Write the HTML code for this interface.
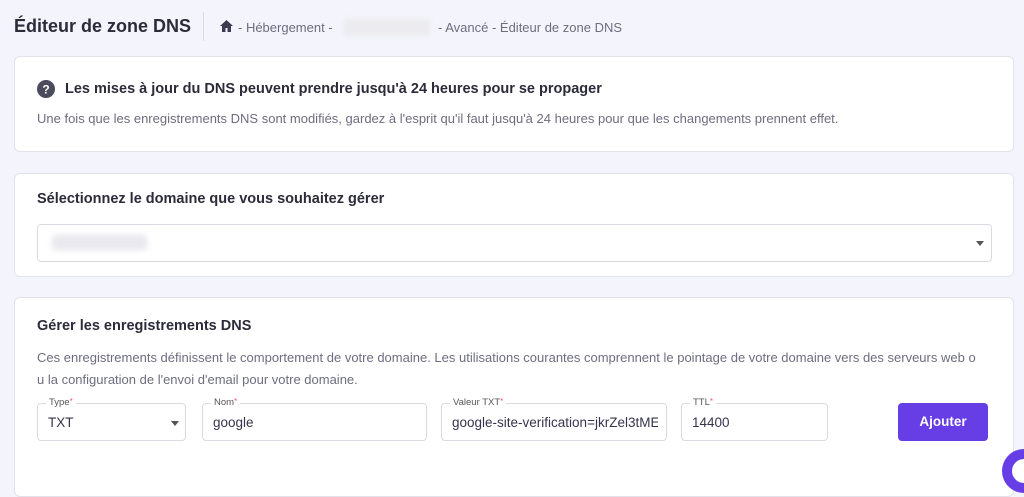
<!DOCTYPE html>
<html><head><meta charset="utf-8"><style>
*{box-sizing:border-box;margin:0;padding:0}
body{width:1024px;height:467px;overflow:hidden;background:#f4f5fc;font-family:"Liberation Sans",sans-serif;color:#36344d;position:relative}
.abs{position:absolute}
.card{position:absolute;left:14px;width:1000px;background:#fff;border:1px solid #e2e2ea;border-radius:6px}
.h{font-weight:bold;font-size:14.5px;color:#2b2b3a}
.p{font-size:13px;color:#6d6d80}
.inp{position:absolute;top:403px;height:38px;border:1px solid #dadae3;border-radius:4px;background:#fff;font-size:13.5px;color:#36344d;padding:11px 10px;white-space:nowrap}
.lab{position:absolute;top:-7px;left:8px;background:#fff;padding:0 3px;font-size:9.5px;color:#555}
.lab b{color:#fc5185;font-weight:normal;font-size:8px;vertical-align:top}
</style></head><body>
<div class="abs" style="left:14px;top:16px;font-size:18px;font-weight:bold;color:#2b2b3a">Éditeur de zone DNS</div>
<div class="abs" style="left:203px;top:12px;width:1px;height:29px;background:#dcdce4"></div>
<svg class="abs" style="left:220px;top:20px" width="13" height="12" viewBox="0 0 13 12"><path d="M6.5 0L0 6h2v6h3.5V8h2v4H11V6h2z" fill="#3b3b4f"/></svg>
<div class="abs p" style="left:238px;top:20px">- Hébergement -</div>
<div class="abs" style="left:343px;top:18px;width:88px;height:18px;background:#ececf0;border-radius:3px;filter:blur(2px)"></div>
<div class="abs p" style="left:438px;top:20px">- Avancé - Éditeur de zone DNS</div>

<div class="card" style="top:56px;height:96px"></div>
<svg class="abs" style="left:37px;top:80px" width="18" height="18" viewBox="0 0 18 18"><circle cx="9" cy="9" r="9" fill="#4b4b5e"/><text x="9" y="13.5" text-anchor="middle" font-family="Liberation Sans" font-weight="bold" font-size="12" fill="#fff">?</text></svg>
<div class="abs h" style="left:65px;top:81px">Les mises à jour du DNS peuvent prendre jusqu'à 24 heures pour se propager</div>
<div class="abs p" style="left:37px;top:111px">Une fois que les enregistrements DNS sont modifiés, gardez à l'esprit qu'il faut jusqu'à 24 heures pour que les changements prennent effet.</div>

<div class="card" style="top:173px;height:104px"></div>
<div class="abs h" style="left:37px;top:191px">Sélectionnez le domaine que vous souhaitez gérer</div>
<div class="abs" style="left:37px;top:224px;width:955px;height:38px;border:1px solid #dadae3;border-radius:4px"></div>
<div class="abs" style="left:52px;top:235px;width:95px;height:15px;background:#e8e8ee;border-radius:3px;filter:blur(3px)"></div>
<div class="abs" style="left:976px;top:241px;width:0;height:0;border-left:4px solid transparent;border-right:4px solid transparent;border-top:5px solid #555"></div>

<div class="card" style="top:297px;height:200px"></div>
<div class="abs h" style="left:37px;top:318px">Gérer les enregistrements DNS</div>
<div class="abs p" style="left:37px;top:347px;width:980px;line-height:22px;white-space:nowrap">Ces enregistrements définissent le comportement de votre domaine. Les utilisations courantes comprennent le pointage de votre domaine vers des serveurs web o<br>u la configuration de l'envoi d'email pour votre domaine.</div>

<div class="inp" style="left:37px;width:149px"><span class="lab">Type<b>*</b></span>TXT<span class="abs" style="right:6px;top:17px;border-left:4px solid transparent;border-right:4px solid transparent;border-top:5px solid #555"></span></div>
<div class="inp" style="left:202px;width:225px"><span class="lab">Nom<b>*</b></span>google</div>
<div class="inp" style="left:441px;width:226px"><span class="lab">Valeur TXT<b>*</b></span><span style="display:block;overflow:hidden;width:206px">google-site-verification=jkrZel3tME</span></div>
<div class="inp" style="left:681px;width:147px"><span class="lab">TTL<b>*</b></span>14400</div>
<div class="abs" style="left:898px;top:403px;width:90px;height:38px;background:#673de6;border-radius:4px;color:#fff;font-weight:bold;font-size:13.5px;text-align:center;line-height:38px">Ajouter</div>
<div class="abs" style="left:1002px;top:449px;width:44px;height:44px;border-radius:50%;background:#673de6"></div>
<div class="abs" style="left:1012px;top:459px;width:24px;height:24px;border-radius:50%;background:#fff"></div>
</body></html>
